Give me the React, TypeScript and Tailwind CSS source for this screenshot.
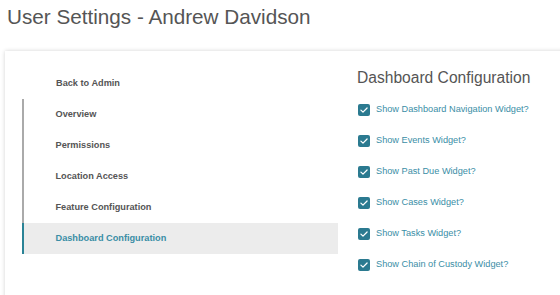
const navItems = ['Overview', 'Permissions', 'Location Access', 'Feature Configuration', 'Dashboard Configuration']

const widgets = [
  'Show Dashboard Navigation Widget?',
  'Show Events Widget?',
  'Show Past Due Widget?',
  'Show Cases Widget?',
  'Show Tasks Widget?',
  'Show Chain of Custody Widget?',
]

function CheckBox() {
  return (
    <span className="flex h-[12px] w-[12px] shrink-0 items-center justify-center rounded-[2px] bg-[#2b7a90]">
      <svg viewBox="0 0 12 12" className="h-[10px] w-[10px]" fill="none">
        <path d="M2.3 6.2 4.8 8.6 9.7 3.6" stroke="white" strokeWidth="1.5" strokeLinecap="round" strokeLinejoin="round" />
      </svg>
    </span>
  )
}

export default function App() {
  const active = 'Dashboard Configuration'

  return (
    <div className="h-[295px] w-[560px] overflow-hidden bg-white font-['Liberation_Sans',Arial,sans-serif]">
      <h1 className="pl-[7px] pt-[3px] text-[20.7px] leading-[28px] text-[#555]">User Settings - Andrew Davidson</h1>

      <div className="ml-[5px] mt-[20px] flex h-[300px] w-[620px] bg-white pt-[17px] shadow-[0_0_4px_rgba(0,0,0,0.18)]">
        <nav className="ml-[17px] w-[316px]">
          <div className="flex h-[31px] items-center pl-[34px] text-[9.2px] font-bold text-[#555]">Back to Admin</div>
          <div className="border-l-[2.5px] border-[#aaa]">
            {navItems.map((item) => {
              const isActive = item === active
              return (
                <div
                  key={item}
                  className={`-ml-[2.5px] flex h-[31px] items-center border-l-[2.5px] pl-[32px] text-[9.2px] font-bold ${
                    isActive ? 'border-[#2a8396] bg-[#ececec] text-[#3a8ea6]' : 'border-transparent text-[#555]'
                  }`}
                >
                  {item}
                </div>
              )
            })}
          </div>
        </nav>

        <section className="ml-[19px]">
          <h2 className="text-[15.6px] leading-[20px] text-[#555]">Dashboard Configuration</h2>
          <div className="mt-[6px]">
            {widgets.map((label) => (
              <label key={label} className="flex h-[31px] items-center gap-[6px] pl-[1px] text-[9.2px] text-[#3a8ea6]">
                <CheckBox />
                <span>{label}</span>
              </label>
            ))}
          </div>
        </section>
      </div>
    </div>
  )
}
